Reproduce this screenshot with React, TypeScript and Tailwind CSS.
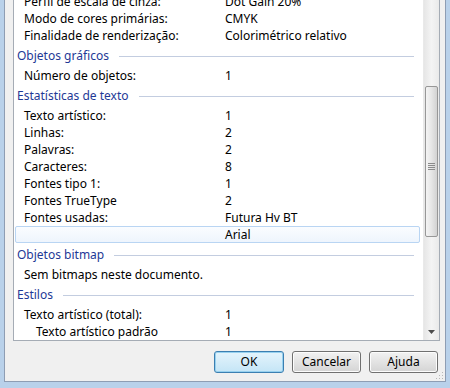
import React from 'react';

type Row =
  | { kind: 'item'; label: string; value?: string; indent?: boolean; selected?: boolean }
  | { kind: 'group'; title: string };

const rows: Row[] = [
  { kind: 'item', label: 'Perfil de escala de cinza:', value: 'Dot Gain 20%' },
  { kind: 'item', label: 'Modo de cores primárias:', value: 'CMYK' },
  { kind: 'item', label: 'Finalidade de renderização:', value: 'Colorimétrico relativo' },
  { kind: 'group', title: 'Objetos gráficos' },
  { kind: 'item', label: 'Número de objetos:', value: '1' },
  { kind: 'group', title: 'Estatísticas de texto' },
  { kind: 'item', label: 'Texto artístico:', value: '1' },
  { kind: 'item', label: 'Linhas:', value: '2' },
  { kind: 'item', label: 'Palavras:', value: '2' },
  { kind: 'item', label: 'Caracteres:', value: '8' },
  { kind: 'item', label: 'Fontes tipo 1:', value: '1' },
  { kind: 'item', label: 'Fontes TrueType', value: '2' },
  { kind: 'item', label: 'Fontes usadas:', value: 'Futura Hv BT' },
  { kind: 'item', label: '', value: 'Arial', selected: true },
  { kind: 'group', title: 'Objetos bitmap' },
  { kind: 'item', label: 'Sem bitmaps neste documento.' },
  { kind: 'group', title: 'Estilos' },
  { kind: 'item', label: 'Texto artístico (total):', value: '1' },
  { kind: 'item', label: 'Texto artístico padrão', value: '1', indent: true },
];

const GroupHeader = ({ title }: { title: string }) => (
  <div className="h-[23px] flex items-center pl-[3px] pr-[9px]">
    <span className="text-[#1e3996] whitespace-nowrap">{title}</span>
    <div className="flex-1 h-px bg-[#c3cde0] ml-[10px] mt-[1px]" />
  </div>
);

const ItemRow = ({ label, value, indent, selected }: { label: string; value?: string; indent?: boolean; selected?: boolean }) => (
  <div
    className={
      selected
        ? 'h-[17px] flex items-center ml-[1px] mr-[3px] border border-[#b9d5f3] rounded-[2px] bg-gradient-to-b from-[#fafcff] to-[#eef5fd]'
        : 'h-[17px] flex items-center'
    }
  >
    <span
      className={
        selected
          ? 'w-[209px] shrink-0 whitespace-nowrap'
          : indent
            ? 'w-[211px] shrink-0 pl-[22px] whitespace-nowrap'
            : 'w-[211px] shrink-0 pl-[10px] whitespace-nowrap'
      }
    >
      {label}
    </span>
    <span className="whitespace-nowrap">{value}</span>
  </div>
);

const Scrollbar = () => (
  <div className="w-[16px] h-full flex flex-col bg-gradient-to-r from-[#e6e6e6] via-[#f4f4f4] to-[#eaeaea] border-l border-[#e9e9e9]">
    <div className="h-[86px]" />
    <div className="h-[151px] mx-[1px] rounded-[2px] border border-[#979797] bg-gradient-to-r from-[#f4f4f4] via-[#e6e6e6] to-[#d2d2d2] flex items-center justify-center">
      <div className="flex flex-col gap-[1px] mt-[10px]">
        <div className="w-[7px] h-px bg-[#8b8b8b]" />
        <div className="w-[7px] h-px bg-[#8b8b8b]" />
        <div className="w-[7px] h-px bg-[#8b8b8b]" />
        <div className="w-[7px] h-px bg-[#8b8b8b]" />
      </div>
    </div>
    <div className="flex-1" />
    <div className="h-[17px] flex items-center justify-center">
      <svg width="7" height="4" viewBox="0 0 7 4">
        <path d="M0 0H7L3.5 4Z" fill="#4d4d4d" />
      </svg>
    </div>
  </div>
);

const Button = ({ label, primary }: { label: string; primary?: boolean }) => (
  <button
    className={
      primary
        ? 'w-[70px] h-[22px] rounded-[3px] border border-[#3c7fb1] bg-gradient-to-b from-[#e5f4fc] to-[#c4e5f6] shadow-[inset_0_0_0_1px_#98d1ef] text-black'
        : 'w-[69px] h-[22px] rounded-[3px] border border-[#707070] bg-gradient-to-b from-[#f2f2f2] to-[#d4d4d4] shadow-[inset_0_0_0_1px_#fcfcfc] text-black'
    }
  >
    {label}
  </button>
);

export default function App() {
  return (
    <div
      className="w-[450px] h-[388px] overflow-hidden bg-[#b9d1ea] px-[4px] pb-[6px] flex flex-col text-[12px] text-black"
      style={{ fontFamily: '"Noto Sans", "Open Sans", sans-serif' }}
    >
      <div className="flex-1 flex flex-col bg-[#f0f0f0] border-x border-b border-[#8e9db3]">
        <div className="h-[341px] ml-[8px] mr-[5px] border-x border-b border-[#a5acb5] bg-white flex overflow-hidden">
          <div className="flex-1 overflow-hidden">
            <div className="-mt-[7px]">
              {rows.map((r, i) =>
                r.kind === 'group' ? (
                  <GroupHeader key={i} title={r.title} />
                ) : (
                  <ItemRow key={i} label={r.label} value={r.value} indent={r.indent} selected={r.selected} />
                )
              )}
            </div>
          </div>
          <Scrollbar />
        </div>
        <div className="flex-1 flex items-start justify-end gap-[8px] pt-[10px] pr-[7px] relative">
          <Button label="OK" primary />
          <Button label="Cancelar" />
          <Button label="Ajuda" />
          <svg className="absolute right-[1px] bottom-[1px]" width="10" height="10" viewBox="0 0 10 10">
            <rect x="8" y="2" width="1" height="1" fill="#b8b8b8" />
            <rect x="5" y="5" width="1" height="1" fill="#b8b8b8" />
            <rect x="8" y="5" width="1" height="1" fill="#b8b8b8" />
            <rect x="2" y="8" width="1" height="1" fill="#b8b8b8" />
            <rect x="5" y="8" width="1" height="1" fill="#b8b8b8" />
            <rect x="8" y="8" width="1" height="1" fill="#b8b8b8" />
          </svg>
        </div>
      </div>
    </div>
  );
}
